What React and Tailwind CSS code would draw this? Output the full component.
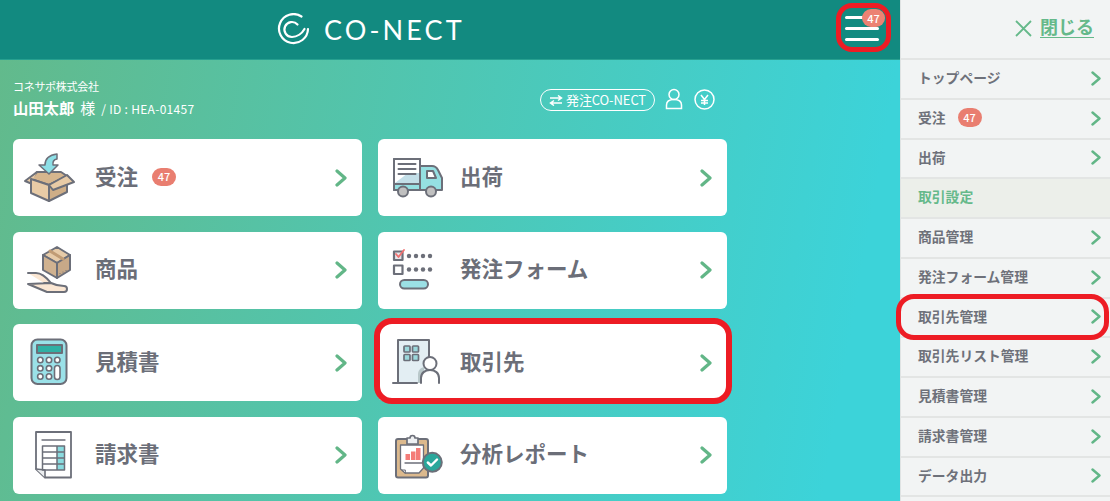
import React from "react";

const S = "#6c6f79";
const Ico = ({ children }) => (
  <svg viewBox="0 0 83 77" className="w-[83px] h-[77px] shrink-0" fill="none" stroke={S} strokeWidth="2" strokeLinejoin="round" strokeLinecap="round">
    {children}
  </svg>
);

const BoxIcon = () => (
  <Ico>
    <path d="M24 33H48L54 37L36 46L18 40Z" fill="#d6b68e" />
    <path d="M24 33L12 42L18 44.500" fill="#e8cba6" />
    <path d="M44 15C36 16 32 20 32 26H26L36 35L45 26H40C39.500 23 41 20.500 44 20Z" fill="#8ddfe6" strokeWidth="1.500" />
    <path d="M18 40L36 46V62L18 54Z" fill="#e8cba6" />
    <path d="M36 46L54 38V53L36 62Z" fill="#cfae87" />
    <path d="M54 36L61 43L40 51L36 46Z" fill="#e8cba6" />
  </Ico>
);
const TruckIcon = () => (
  <Ico>
    <path d="M42 27H54C57 27 59 29 60 31L64 39V51H16V44H42Z" fill="#95e0e2" />
    <rect x="16" y="20" width="26" height="25" fill="#fff" />
    <path d="M17 44L30 34H41V44Z" fill="#c3dfe8" stroke="none" />
    <path d="M16 20H42V51H16Z" />
    <path d="M20.500 25H37.500M20.500 30H37.500M20.500 35H37.500" />
    <path d="M49 32H55L58 39H49Z" fill="#fff" />
    <circle cx="25" cy="52.500" r="5" fill="#c0c0c0" />
    <circle cx="53" cy="52.500" r="5" fill="#c0c0c0" />
  </Ico>
);
const HandIcon = () => (
  <Ico>
    <path d="M44 15L57 23L44 31L30 23Z" fill="#e6cba8" />
    <path d="M30 23L44 31V46L30 38Z" fill="#d0b290" />
    <path d="M57 23L44 31V46L57 38Z" fill="#c7a988" />
    <path d="M37 19L50 27" strokeWidth="3" stroke="#c09c75" />
    <path d="M15 41H23C28 41 34 46 38 51H31M38 51C42 53 47 54 51 54A3 3 0 0 1 51 60H34L15 52Z" fill="#fbe7d3" />
    <path d="M47 41.500h.01M50 40h.01M53 38.500h.01" strokeWidth="1.200" />
  </Ico>
);
const FormIcon = () => (
  <Ico>
    <rect x="16" y="19.500" width="8.500" height="8.500" fill="#e6e6ea" strokeWidth="2.200" />
    <path d="M18 22L20.500 25L26 18" stroke="#f07070" strokeWidth="1.800" />
    <rect x="16" y="33.500" width="8.500" height="8.500" fill="#fff" strokeWidth="2.200" />
    {[31, 38, 45, 52].map((x) => (
      <g key={x} fill={S} stroke="none">
        <circle cx={x} cy="24" r="2.200" />
        <circle cx={x} cy="37.500" r="2.200" />
      </g>
    ))}
    <rect x="22" y="48" width="28" height="8.500" rx="4.250" fill="#9be0e5" />
  </Ico>
);
const CalcIcon = () => (
  <Ico>
    <rect x="18.500" y="15.500" width="35" height="44.500" rx="6" fill="#9ae1e8" />
    <rect x="24" y="21" width="25" height="8" fill="#2fb0a4" />
    {[[27.300, 36], [36, 36], [44.300, 36], [27.300, 44.300], [36, 44.300], [27.300, 52.500], [36, 52.500]].map(([x, y], i) => (
      <circle key={i} cx={x} cy={y} r="2.700" fill="#fff" strokeWidth="1.600" />
    ))}
    <rect x="41.500" y="41.500" width="5.500" height="14" rx="2.750" fill="#fff" strokeWidth="1.600" />
  </Ico>
);
const BuildingIcon = () => (
  <Ico>
    <path d="M20 16H51V45L41 59H20Z" fill="#e3eef3" stroke="none" />
    <path d="M20 59V16H51V33" />
    <path d="M15 59H39" />
    <path d="M40 59V50C40 47 42 44 46 43V59Z" fill="#b9c8ca" stroke="none" />
    {[[26, 22], [34.500, 22], [26, 30.500], [34.500, 30.500]].map(([x, y], i) => (
      <rect key={i} x={x} y={y} width="6" height="6" rx="0.800" fill="#9bd8dc" strokeWidth="1.700" />
    ))}
    <circle cx="52" cy="39.500" r="6.500" fill="#fff" />
    <path d="M43 59V54C43 49 47 46 52 46C57 46 61 49 61 54V59" fill="#fff" />
  </Ico>
);
const InvoiceIcon = () => (
  <Ico>
    <path d="M23 15H58V60.500H32L23 52Z" fill="#fff" strokeWidth="1.800" />
    <path d="M23 52L32 53V60.500" fill="#eceef0" strokeWidth="1.600" />
    <path d="M29 23H52" strokeWidth="1.300" />
    <rect x="44" y="29" width="7.500" height="24" fill="#8adbdf" stroke="none" />
    <path d="M29.500 29H51.500V53H29.500ZM29.500 35H51.500M29.500 41H51.500M29.500 47H51.500M44 29V53" strokeWidth="1.500" />
  </Ico>
);
const ClipIcon = () => (
  <Ico>
    <rect x="18" y="22" width="32" height="38.500" rx="2" fill="#dcb98d" />
    <path d="M22.500 28H45.500V51L41 56H27L22.500 52Z" fill="#fff" strokeWidth="1.300" />
    <path d="M27 56L24 53H27Z" fill="#e6e6ea" strokeWidth="1" />
    <path d="M29 23V21H32A2.500 2.500 0 0 1 37 21H40V27H29Z" fill="#eef0f2" strokeWidth="1.700" />
    <g fill="#f47c78" stroke="none">
      <rect x="27.500" y="37" width="4.500" height="6" />
      <rect x="33" y="34.500" width="4.500" height="8.500" />
      <rect x="38" y="31" width="4.500" height="12" />
    </g>
    <path d="M27 46H44" strokeWidth="1.300" />
    <circle cx="54.300" cy="45.300" r="9.500" fill="#2aa79b" />
    <path d="M49.800 45.500L53 48.500L59 42.500" stroke="#fff" strokeWidth="2.400" />
  </Ico>
);

const Chev = ({ big }) =>
  big ? (
    <svg width="12" height="18" viewBox="0 0 12 18" fill="none" stroke="#62b687" strokeWidth="3.200" strokeLinecap="round" strokeLinejoin="round">
      <path d="M2 2L10 9L2 16" />
    </svg>
  ) : (
    <svg className="mt-[2px]" width="10" height="15" viewBox="0 0 10 15" fill="none" stroke="#62b687" strokeWidth="2.400" strokeLinecap="round" strokeLinejoin="round">
      <path d="M1.500 1.500L8.500 7.500L1.500 13.500" />
    </svg>
  );

const Badge = ({ big }) => (
  <span
    className={
      big
        ? "ml-[14px] -mt-[2px] w-[24px] h-[18px] rounded-full bg-[#e97e70] text-white text-[11px] font-medium flex items-center justify-center"
        : "ml-[12px] w-[24px] h-[19px] rounded-full bg-[#e97e70] text-white text-[11px] font-medium flex items-center justify-center"
    }
  >
    47
  </span>
);

const cards = [
  ["受注", BoxIcon, true],
  ["出荷", TruckIcon],
  ["商品", HandIcon],
  ["発注フォーム", FormIcon],
  ["見積書", CalcIcon],
  ["取引先", BuildingIcon, false, true],
  ["請求書", InvoiceIcon],
  ["分析レポート", ClipIcon],
];

const rows = [
  { t: "トップページ" },
  { t: "受注", badge: true },
  { t: "出荷" },
  { t: "取引設定", head: true },
  { t: "商品管理" },
  { t: "発注フォーム管理" },
  { t: "取引先管理", mark: true },
  { t: "取引先リスト管理" },
  { t: "見積書管理" },
  { t: "請求書管理" },
  { t: "データ出力" },
];

export default function App() {
  return (
    <div className="w-[1110px] h-[501px] flex overflow-hidden bg-[#f2f4f4] font-['Noto_Sans_CJK_JP','Noto_Sans',sans-serif]">
      <div className="w-[900px] shrink-0 flex flex-col">
        <header className="h-[60px] shrink-0 bg-[#128a80] border-b border-[#27a090] relative flex items-center">
          <div className="ml-[277px] flex items-center">
            <svg width="33" height="33" viewBox="0 0 33 33" fill="none" stroke="#fff" strokeWidth="2.200" strokeLinecap="round" strokeLinejoin="round">
              <path d="M24.500 3.500A14.500 14.500 0 1 0 31 16" />
              <path d="M20.500 11.500A7.500 7.500 0 1 0 15 24C20 24 25 20.500 27.500 16" />
            </svg>
            <span className="ml-[14px] text-white text-[27px] leading-none tracking-[3.100px] font-['Lato',sans-serif] font-normal">CO-NECT</span>
          </div>
          <div className="absolute left-[836px] top-[3px] w-[55px] h-[49px] border-[5px] border-[#ed1c24] rounded-[16px] flex flex-col justify-between pt-[8px] pb-[6px] pl-[4px] pr-[7px]">
            <i className="block h-[3px] bg-white rounded-full" />
            <i className="block h-[3px] bg-white rounded-full" />
            <i className="block h-[3px] bg-white rounded-full" />
            <span className="absolute left-[21px] top-[1px] w-[23px] h-[18px] rounded-full bg-[#ec8273] text-white text-[11px] font-medium flex items-center justify-center">47</span>
          </div>
        </header>
        <main className="flex-1 pl-[13px] bg-[linear-gradient(100deg,#62ba8c_0%,#3cd3d9_92%)]">
          <div className="h-[79px] flex justify-between pr-[185px] text-white">
            <div className="pt-[18px]">
              <p className="text-[11px] leading-[16px] tracking-[-0.300px]">コネサポ株式会社</p>
              <p className="flex items-baseline leading-[24px] mt-[1px]">
                <b className="text-[15.300px] font-bold">山田太郎</b>
                <span className="text-[15px] ml-[6px]">様</span>
                <span className="text-[12px] ml-[6px] tracking-[0.300px]">/ ID : HEA-01457</span>
              </p>
            </div>
            <div className="pt-[29px] flex items-start">
              <span className="w-[115px] h-[22px] rounded-full border-[1.500px] border-white flex items-center justify-center gap-[3px] text-[13px] tracking-[-0.100px]">
                <svg width="14" height="11" viewBox="0 0 14 11" fill="none" stroke="#fff" strokeWidth="1.500">
                  <path d="M1 3H12M9 .5L12.500 3L9 5.500" />
                  <path d="M13 8H2M5 5.500L1.500 8L5 10.500" />
                </svg>
                発注CO-NECT
              </span>
              <svg className="ml-[10px] -mt-[1px]" width="18" height="22" viewBox="0 0 18 22" fill="none" stroke="#fff" strokeWidth="1.500">
                <circle cx="9" cy="6.500" r="5" />
                <path d="M1.500 20.500V17C1.500 13.500 4 11.500 9 11.500S16.500 13.500 16.500 17V20.500Z" />
              </svg>
              <svg className="ml-[11px]" width="21" height="21" viewBox="0 0 21 21" fill="none" stroke="#fff" strokeWidth="1.500">
                <circle cx="10.500" cy="10.500" r="9.500" />
                <path d="M7 6L10.500 10.500L14 6M10.500 10.500V16M7 11.500H14M7 14H14" />
              </svg>
            </div>
          </div>
          <div className="grid grid-cols-[349px_349px] gap-x-[16px] gap-y-[15.500px]">
            {cards.map(([t, I, badge, mark]) => (
              <a key={t} className="relative h-[77px] rounded-[6px] bg-white flex items-center pr-[15px]">
                <I />
                <span className="-ml-[1px] -mt-[4px] text-[21.500px] leading-none font-bold text-[#6b6e78]">{t}</span>
                {badge && <Badge big />}
                <span className="ml-auto flex">
                  <Chev big />
                </span>
                {mark && <span className="absolute -left-[4px] -top-[6px] w-[358px] h-[86px] border-[6px] border-[#ed1c24] rounded-[18px]" />}
              </a>
            ))}
          </div>
        </main>
      </div>
      <aside className="flex-1 border-l border-[#dfe3e3] flex flex-col relative">
        <div className="h-[60px] shrink-0 border-b-2 border-[#e3e5e4] flex items-center justify-end pr-[16px] pb-[2px] gap-[7px]">
          <svg width="19" height="19" viewBox="0 0 19 19" fill="none" stroke="#65b98a" strokeWidth="1.800">
            <path d="M2 2L17 17M17 2L2 17" />
          </svg>
          <a className="-mt-[4px] text-[18px] font-bold leading-none text-[#65b98a] underline underline-offset-[3px]">閉じる</a>
        </div>
        {rows.map((r) => (
          <div
            key={r.t}
            className={
              r.head
                ? "relative h-[39.750px] shrink-0 border-b-2 border-[#e3e5e4] bg-[#ecefea] flex items-center pl-[17px] pb-[3px] text-[13.800px] font-bold text-[#65b98a]"
                : "relative h-[39.750px] shrink-0 border-b-2 border-[#e3e5e4] flex items-center pl-[17px] pr-[9px] pb-[3px] text-[13.800px] font-bold text-[#6e717a]"
            }
          >
            <span>{r.t}</span>
            {r.badge && <Badge />}
            {!r.head && (
              <span className="ml-auto flex">
                <Chev />
              </span>
            )}
            {r.mark && <span className="absolute -left-[5px] -top-[5px] w-[213px] h-[46px] border-[5px] border-[#ed1c24] rounded-[18px]" />}
          </div>
        ))}
      </aside>
    </div>
  );
}
